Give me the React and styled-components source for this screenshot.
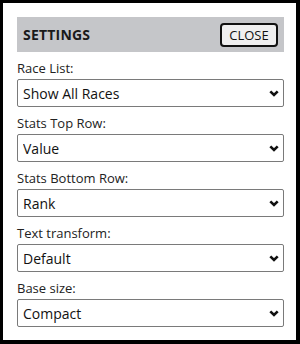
import React from 'react'
import styled, { createGlobalStyle } from 'styled-components'

const GlobalStyle = createGlobalStyle`
  body {
    margin: 0;
    background: #fff;
    font-family: 'Open Sans', 'Noto Sans', sans-serif;
  }
`

const Panel = styled.section`
  box-sizing: border-box;
  width: 300px;
  height: 344px;
  border-style: solid;
  border-color: #000;
  border-width: 3px 4px 4px 3px;
  padding: 14px 12px 0 14px;
  background: #fff;
`

const Header = styled.header`
  display: flex;
  align-items: center;
  justify-content: space-between;
  height: 35px;
  box-sizing: border-box;
  padding: 0 6px;
  background: #c5c6c9;
`

const Title = styled.h2`
  margin: 0;
  font-size: 14px;
  font-weight: 700;
  color: #1a1a1a;
  letter-spacing: 0.2px;
`

const CloseButton = styled.button`
  height: 24px;
  width: 58px;
  box-sizing: border-box;
  border: 2px solid #111;
  border-radius: 4px;
  background: #efefef;
  font-family: inherit;
  font-size: 13px;
  color: #111;
  padding: 0;
  cursor: pointer;
`

const Form = styled.div`
  display: flex;
  flex-direction: column;
  gap: 9px;
  padding-top: 9px;
`

const Field = styled.label`
  display: flex;
  flex-direction: column;
  gap: 3px;
`

const LabelText = styled.span`
  font-size: 13px;
  line-height: 15px;
  color: #222;
`

const SelectWrap = styled.div`
  position: relative;
`

const Select = styled.select`
  appearance: none;
  width: 100%;
  height: 28px;
  box-sizing: border-box;
  border: 1px solid #7a7a7a;
  border-radius: 2px;
  background: #fff;
  padding: 0 5px;
  font-family: inherit;
  font-size: 14px;
  color: #111;
`

const Chevron = styled.svg`
  position: absolute;
  right: 5px;
  top: 11px;
  pointer-events: none;
`

const fields = [
  { label: 'Race List:', value: 'Show All Races' },
  { label: 'Stats Top Row:', value: 'Value' },
  { label: 'Stats Bottom Row:', value: 'Rank' },
  { label: 'Text transform:', value: 'Default' },
  { label: 'Base size:', value: 'Compact' },
]

const SelectField = ({ label, value }) => (
  <Field>
    <LabelText>{label}</LabelText>
    <SelectWrap>
      <Select defaultValue={value}>
        <option>{value}</option>
      </Select>
      <Chevron width='10' height='7' viewBox='0 0 10 7'>
        <path d='M1.3 1.3 L5 5 L8.7 1.3' fill='none' stroke='#111' strokeWidth='2.6' />
      </Chevron>
    </SelectWrap>
  </Field>
)

const App = () => (
  <>
    <GlobalStyle />
    <Panel>
      <Header>
        <Title>SETTINGS</Title>
        <CloseButton>CLOSE</CloseButton>
      </Header>
      <Form>
        {fields.map(f => (
          <SelectField key={f.label} label={f.label} value={f.value} />
        ))}
      </Form>
    </Panel>
  </>
)

export default App
